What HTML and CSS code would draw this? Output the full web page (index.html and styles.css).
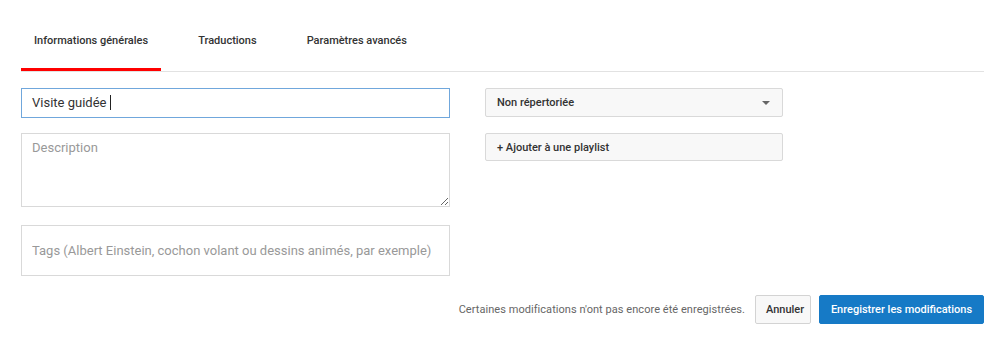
FILE: index.html
```html
<!DOCTYPE html>
<html lang="fr">
<head>
    <meta charset="UTF-8">
    <title>Modifier la vidéo</title>
    <link rel="stylesheet" href="styles.css">
</head>
<body>
    <div class="editor">
        <div class="tabs">
            <div class="tab tab-active">Informations générales</div>
            <div class="tab">Traductions</div>
            <div class="tab">Paramètres avancés</div>
        </div>

        <div class="form">
            <div class="form-left">
                <div class="field field-title">Visite guidée <span class="caret"></span></div>
                <textarea class="field field-desc" placeholder="Description"></textarea>
                <input class="field field-tags" type="text" placeholder="Tags (Albert Einstein, cochon volant ou dessins animés, par exemple)">
            </div>
            <div class="form-right">
                <div class="select-btn">
                    <span>Non répertoriée</span>
                    <span class="arrow"></span>
                </div>
                <div class="select-btn playlist-btn">+ Ajouter à une playlist</div>
            </div>
        </div>

        <div class="footer">
            <span class="unsaved">Certaines modifications n'ont pas encore été enregistrées.</span>
            <button class="btn btn-cancel">Annuler</button>
            <button class="btn btn-save">Enregistrer les modifications</button>
        </div>
    </div>
</body>
</html>
```

FILE: styles.css
```css
body {
    margin: 0;
    font-family: Roboto, Arial, sans-serif;
    background: #fff;
    color: #333;
}

.editor {
    width: 963px;
    margin-left: 21px;
}

.tabs {
    display: flex;
    border-bottom: 1px solid #e2e2e2;
}

.tab {
    padding: 34px 13px 21px;
    margin-right: 24px;
    font-size: 11px;
    line-height: 13px;
    font-weight: 500;
    color: #333;
    border-bottom: 3px solid transparent;
}

.tab-active {
    border-bottom-color: #f00;
}

.form {
    display: flex;
    gap: 35px;
    margin-top: 16px;
}

.form-left {
    width: 429px;
    display: flex;
    flex-direction: column;
}

.field {
    box-sizing: border-box;
    width: 100%;
    border: 1px solid #d9d9d9;
    font-family: Roboto, Arial, sans-serif;
    font-size: 13px;
    color: #333;
    padding: 0 10px;
    margin: 0;
    outline: none;
}

.field::placeholder {
    color: #999;
}

.field-title {
    height: 30px;
    line-height: 28px;
    border-color: #70a7dc;
}

.caret {
    display: inline-block;
    width: 1px;
    height: 15px;
    background: #222;
    vertical-align: -3px;
}

.field-desc {
    height: 74px;
    margin-top: 15px;
    padding-top: 6px;
    line-height: 16px;
    resize: vertical;
}

.field-tags {
    height: 51px;
    margin-top: 18px;
}

.form-right {
    width: 298px;
    display: flex;
    flex-direction: column;
}

.select-btn {
    box-sizing: border-box;
    height: 29px;
    display: flex;
    align-items: center;
    justify-content: space-between;
    padding: 0 11px;
    background: #f8f8f8;
    border: 1px solid #d9d9d9;
    border-radius: 2px;
    font-size: 11px;
    font-weight: 500;
    color: #333;
}

.arrow {
    width: 0;
    height: 0;
    border-left: 4px solid transparent;
    border-right: 4px solid transparent;
    border-top: 4px solid #666;
    margin-right: 1px;
}

.playlist-btn {
    height: 28px;
    margin-top: 16px;
}

.footer {
    display: flex;
    justify-content: flex-end;
    align-items: center;
    margin-top: 19px;
}

.unsaved {
    font-size: 11px;
    letter-spacing: 0.05px;
    color: #666;
    margin-right: 10px;
}

.btn {
    height: 29px;
    padding: 0 10px;
    border-radius: 2px;
    font-family: Roboto, Arial, sans-serif;
    font-size: 11px;
    font-weight: 500;
    cursor: pointer;
}

.btn-cancel {
    width: 56px;
    background: #f8f8f8;
    border: 1px solid #d3d3d3;
    color: #333;
    margin-right: 8px;
}

.btn-save {
    width: 165px;
    background: #167ac6;
    border: 1px solid #167ac6;
    color: #fff;
}
```
